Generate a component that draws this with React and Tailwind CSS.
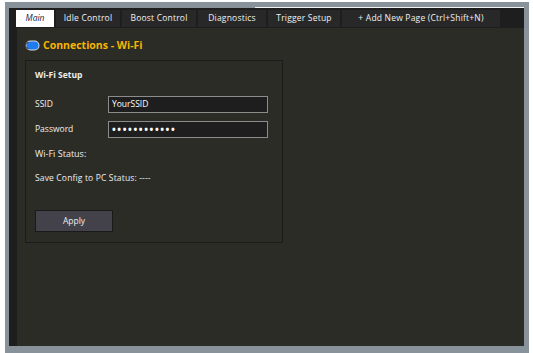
import React from "react";

const tabs = [
  { label: "Idle Control", w: "w-[64px]" },
  { label: "Boost Control", w: "w-[74px]" },
  { label: "Diagnostics", w: "w-[68px]" },
  { label: "Trigger Setup", w: "w-[72px]" },
  { label: "+ Add New Page (Ctrl+Shift+N)", w: "w-[158px]" },
];

const font = { fontFamily: '"Open Sans", "Noto Sans", "DejaVu Sans", sans-serif' };

const App = () => {
  return (
    <div className="w-[533px] h-[353px] bg-white pl-[5px] pt-[2px]" style={font}>
      <div className="w-[524px] h-[351px] bg-[#87929a] pt-[6px] pl-[4px] pr-[5px] pb-[7px]">
        <div className="flex flex-col w-full h-full bg-[#1e1e1e]">
          {/* Tab strip */}
          <div className="relative flex h-[20px] pl-[7px] pt-[2px] gap-[2px] shrink-0">
            <div className="absolute top-[-1px] left-[246px] right-0 h-px bg-[#f2f2f2]" />
            <div className="w-[38px] h-[17px] bg-white flex items-center justify-center text-[8.5px] italic text-[#1b1b3a]">
              Main
            </div>
            {tabs.map((t) => (
              <div
                key={t.label}
                className={`${t.w} h-[17px] bg-[#282828] flex items-center justify-center text-[8.5px] tracking-[0.2px] text-[#f0f0f0]`}
              >
                {t.label}
              </div>
            ))}
          </div>

          {/* Body */}
          <div className="flex flex-1">
            <div className="w-[8px] bg-[#1e1e1e]" />
            <div className="flex-1 bg-[#2c2c27] pl-[8px] pt-[12px]">
              <div className="flex items-center gap-[3px] h-[10px]">
                <svg width="15" height="11" viewBox="0 0 15 11">
                  <rect x="0.5" y="0.5" width="14" height="10" rx="5" fill="#d8d8d8" />
                  <rect x="1.5" y="1.5" width="12" height="8" rx="4" fill="#1f7cf0" />
                  <path d="M3.5 2.5 A3 3 0 0 0 3.5 8.5" stroke="#3a3a3a" strokeWidth="1" fill="none" />
                </svg>
                <span className="text-[10.5px] font-bold text-[#f7b500] leading-none">
                  Connections - Wi-Fi
                </span>
              </div>

              <div className="mt-[10px] w-[258px] h-[183px] border border-[#1b1b1b] pl-[9px] pt-[8px] flex flex-col text-[#eeeeee]">
                <div className="text-[8.5px] font-bold leading-[12px]">Wi-Fi Setup</div>

                <div className="flex items-center mt-[15px]">
                  <div className="w-[73px] text-[8.5px]">SSID</div>
                  <div className="w-[160px] h-[17px] bg-[#1e1e1e] border border-[#8c8c8c] flex items-center pl-[3px] text-[8.5px] text-white">
                    YourSSID
                  </div>
                </div>

                <div className="flex items-center mt-[8px]">
                  <div className="w-[73px] text-[8.5px]">Password</div>
                  <div className="w-[160px] h-[17px] bg-[#1e1e1e] border border-[#8c8c8c] flex items-center pl-[3px] text-[10px] font-bold tracking-[1.6px] text-white">
                    ••••••••••••
                  </div>
                </div>

                <div className="mt-[10px] text-[9px] leading-[12px]">Wi-Fi Status:</div>
                <div className="mt-[12px] text-[8.5px] tracking-[0.15px] leading-[12px]">Save Config to PC Status: ----</div>

                <div className="mt-[26px] w-[78px] h-[22px] bg-[#43424a] border border-[#1a1a1a] flex items-center justify-center text-[8.5px] text-[#eeeeee]">
                  Apply
                </div>
              </div>
            </div>
          </div>
        </div>
      </div>
    </div>
  );
};

export default App;
